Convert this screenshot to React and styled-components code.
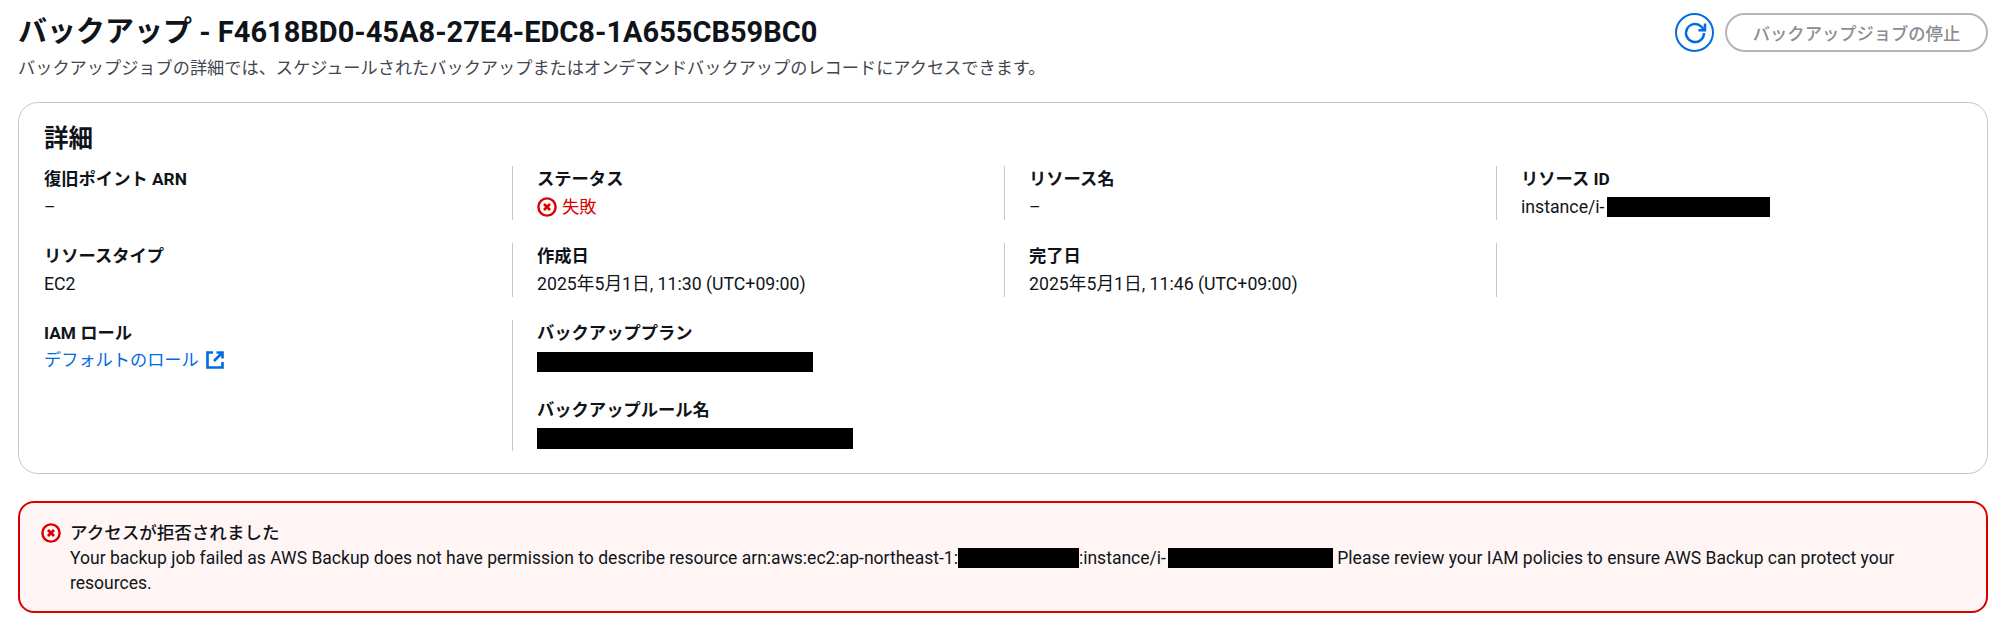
import styled, { createGlobalStyle } from 'styled-components'

const GlobalStyle = createGlobalStyle`
html, body {
  margin: 0;
  padding: 0;
  background: #fff;
}
body {
  font-family: Roboto, "Noto Sans CJK JP", sans-serif;
  font-size: 17.3px;
  line-height: 25.5px;
  color: #0f141a;
}
`

const ErrorIcon = ({ size = 20 }) => (
  <svg width={size} height={size} viewBox="0 0 20 20" fill="none" stroke="#db0000" strokeWidth="2.4">
    <circle cx="10" cy="10" r="8.6" />
    <path d="M7 7l6 6M13 7l-6 6" strokeWidth="2.8" />
  </svg>
)

const RefreshIcon = () => (
  <svg width="26" height="26" viewBox="0 0 26 26" fill="none" stroke="#006ce0" strokeWidth="2.5">
    <path d="M22 13a9 9 0 1 1-2.7-6.4l3 3" />
    <path d="M23 3.6v6.6h-6.6" />
  </svg>
)

const ExternalIcon = () => (
  <svg width="20" height="20" viewBox="0 0 20 20" fill="none" stroke="#006ce0" strokeWidth="2.6">
    <path d="M8 2.5H2.5v15h15V12" />
    <path d="M11.5 2.5h6v6M17.5 2.5L9 11" />
  </svg>
)

const Redacted = styled.span`
  display: inline-block;
  width: ${p => p.$w}px;
  height: ${p => p.$h || 20}px;
  margin-left: ${p => p.$ml || 0}px;
  background: #000;
  vertical-align: ${p => p.$align || '-4px'};
`

const Dash = () => <>–</>

const App = () => (
  <Page>
    <GlobalStyle />
    <Header>
      <div>
        <Title>バックアップ - F4618BD0-45A8-27E4-EDC8-1A655CB59BC0</Title>
        <Subtitle>
          バックアップジョブの詳細では、スケジュールされたバックアップまたはオンデマンドバックアップのレコードにアクセスできます。
        </Subtitle>
      </div>
      <Actions>
        <RefreshButton><RefreshIcon /></RefreshButton>
        <StopButton disabled>バックアップジョブの停止</StopButton>
      </Actions>
    </Header>

    <Card>
      <CardTitle>詳細</CardTitle>
      <Grid>
        <Cell>
          <Label>復旧ポイント ARN</Label>
          <Value><Dash /></Value>
        </Cell>
        <Cell $divider>
          <Label>ステータス</Label>
          <Status><ErrorIcon />失敗</Status>
        </Cell>
        <Cell $divider>
          <Label>リソース名</Label>
          <Value><Dash /></Value>
        </Cell>
        <Cell $divider>
          <Label>リソース ID</Label>
          <Value>instance/i-<Redacted $w={163} $ml={2} /></Value>
        </Cell>

        <Cell>
          <Label>リソースタイプ</Label>
          <Value>EC2</Value>
        </Cell>
        <Cell $divider>
          <Label>作成日</Label>
          <Value>2025年5月1日, 11:30 (UTC+09:00)</Value>
        </Cell>
        <Cell $divider>
          <Label>完了日</Label>
          <Value>2025年5月1日, 11:46 (UTC+09:00)</Value>
        </Cell>
        <Cell $divider />

        <Cell>
          <Label>IAM ロール</Label>
          <Link>デフォルトのロール<ExternalIcon /></Link>
        </Cell>
        <Cell $divider>
          <Label>バックアッププラン</Label>
          <Value><Redacted $w={276} $align="-5px" /></Value>
          <SecondLabel>バックアップルール名</SecondLabel>
          <Value><Redacted $w={316} $h={21} $align="-5px" /></Value>
        </Cell>
      </Grid>
    </Card>

    <Alert>
      <ErrorIcon />
      <AlertBody>
        <AlertTitle>アクセスが拒否されました</AlertTitle>
        Your backup job failed as AWS Backup does not have permission to describe resource arn:aws:ec2:ap-northeast-1:<Redacted $w={121} />:instance/i-<Redacted $w={165} $ml={2} /> Please review your IAM policies to ensure AWS Backup can protect your resources.
      </AlertBody>
    </Alert>
  </Page>
)

const Page = styled.div`
  padding: 12px 12px 0 18px;
`
const Header = styled.div`
  display: flex;
  justify-content: space-between;
  align-items: flex-start;
  height: 90px;
`
const Title = styled.h1`
  margin: 0;
  font-size: 29px;
  line-height: 40px;
  font-weight: 700;
`
const Subtitle = styled.p`
  margin: 3px 0 0;
  font-size: 17.2px;
  line-height: 26px;
  color: #424650;
`
const Actions = styled.div`
  display: flex;
  align-items: center;
  gap: 11px;
  margin-top: 1px;
`
const RefreshButton = styled.button`
  width: 39px;
  height: 39px;
  padding: 0;
  display: grid;
  place-items: center;
  border: 2.5px solid #006ce0;
  border-radius: 50%;
  background: #fff;
`
const StopButton = styled.button`
  width: 263px;
  height: 39px;
  padding: 0;
  border: 2.5px solid #b4b4bb;
  border-radius: 20px;
  background: #fff;
  color: #8c8c94;
  font-family: inherit;
  font-size: 17.3px;
  font-weight: 500;
`
const Card = styled.section`
  height: 372px;
  box-sizing: border-box;
  padding: 20px 25px 0;
  border: 1.5px solid #c6c6cd;
  border-radius: 20px;
`
const CardTitle = styled.h2`
  margin: 0;
  font-size: 24.5px;
  line-height: 32px;
  font-weight: 700;
`
const Grid = styled.div`
  display: grid;
  grid-template-columns: 468px 492px 492px 1fr;
  row-gap: 23px;
  margin-top: 11px;
`
const Cell = styled.div`
  ${p => p.$divider && `
    border-left: 1.5px solid #c6c6cd;
    padding-left: 24px;
  `}
`
const Label = styled.div`
  font-weight: 700;
  line-height: 26px;
`
const SecondLabel = styled(Label)`
  margin-top: 23px;
`
const Value = styled.div`
  font-size: 17.7px;
  line-height: 26px;
  min-height: 26px;
  padding-top: 2px;
`
const Status = styled(Value)`
  display: flex;
  align-items: center;
  gap: 5px;
  font-size: 17.3px;
  color: #db0000;
`
const Link = styled(Value)`
  display: flex;
  align-items: center;
  gap: 6px;
  padding-top: 1px;
  font-size: 17.2px;
  color: #006ce0;
`
const Alert = styled.div`
  display: flex;
  gap: 9px;
  margin: 27px 0 0;
  height: 112px;
  box-sizing: border-box;
  padding: 18px 90px 0 21px;
  background: #fff5f5;
  border: 2.8px solid #db0000;
  border-radius: 16px;

  svg {
    flex-shrink: 0;
    margin-top: 2px;
  }
`
const AlertBody = styled.div`
  font-size: 17.55px;
  line-height: 25px;
`
const AlertTitle = styled.div`
  font-weight: 500;
`

export default App
